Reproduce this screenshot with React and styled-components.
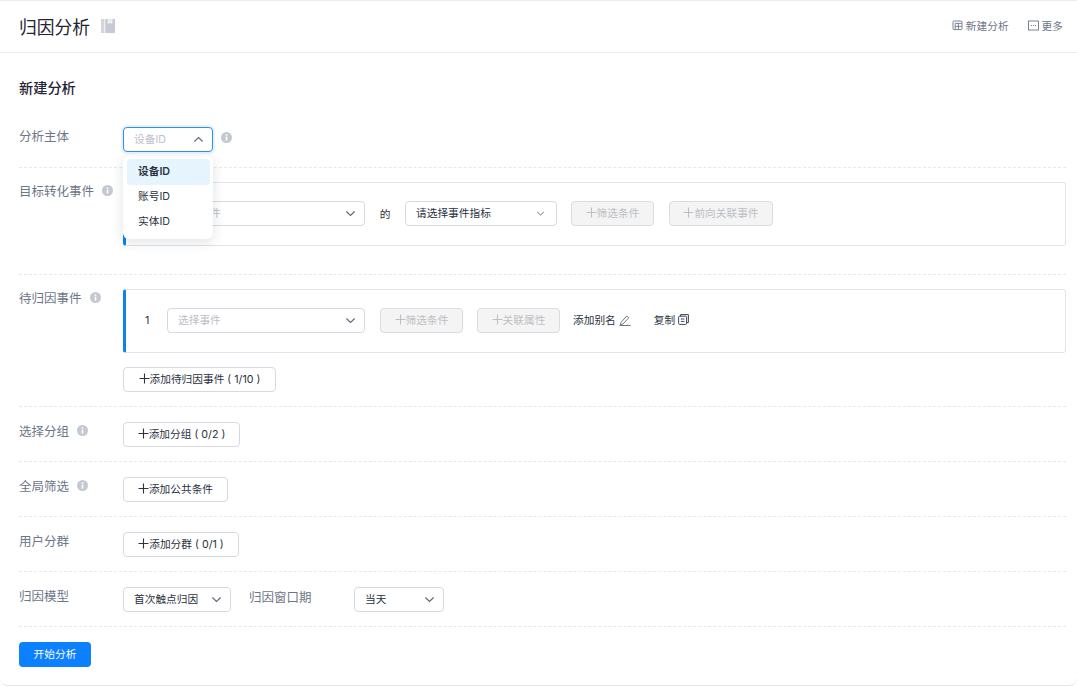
import React from "react";
import styled, { createGlobalStyle } from "styled-components";

const Global = createGlobalStyle`
  html, body { margin: 0; padding: 0; background: #fff; }
  body { font-family: "Inter", "Noto Sans CJK SC", sans-serif; color: #2b3240; }
  * { box-sizing: border-box; }
`;

const Page = styled.div`
  position: relative;
  width: 1077px;
  height: 686px;
  background: #fff;
  border-top: 1px solid #e8ebf0;
  border-bottom: 1px solid #e1e4ea;
  border-radius: 0 0 8px 8px;
`;
const Header = styled.header`
  height: 52px;
  display: flex;
  align-items: center;
  justify-content: space-between;
  padding: 0 14px 2px 19px;
  border-bottom: 1px solid #e8ebf0;
`;
const TitleWrap = styled.div`
  display: flex;
  align-items: center;
  gap: 11px;
`;
const Title = styled.h1`
  margin: 0;
  font-size: 17.8px;
  font-weight: 400;
  color: #1f2532;
`;
const HeaderActions = styled.div`
  display: flex;
  align-items: center;
  gap: 19px;
`;
const HeaderAction = styled.div`
  display: flex;
  align-items: center;
  gap: 3px;
  font-size: 10.7px;
  color: #6d7688;
`;
const Body = styled.main`
  padding: 0 11px 0 19px;
`;
const SectionTitle = styled.h2`
  margin: 0;
  padding-top: 25px;
  height: 59px;
  font-size: 14.2px;
  line-height: 20px;
  font-weight: 500;
  color: #1f2532;
`;
const Row = styled.div`
  display: flex;
  align-items: flex-start;
  padding: ${(p) => p.$top ?? 15}px 0 ${(p) => p.$bottom ?? 14}px;
  border-bottom: 1px dashed #e6e8ed;
`;
const Label = styled.div`
  width: 104px;
  flex: none;
  display: flex;
  align-items: center;
  gap: 8px;
  height: 18px;
  padding-bottom: 2px;
  font-size: 12.5px;
  color: #6d7688;
`;
const Content = styled.div`
  flex: 1;
  display: flex;
  flex-direction: column;
  gap: 14px;
  align-items: flex-start;
`;
const Inline = styled.div`
  display: flex;
  align-items: center;
  gap: ${(p) => p.$gap ?? 8}px;
  margin-left: ${(p) => p.$ml ?? 0}px;
`;
const Card = styled.div`
  width: 100%;
  height: 64px;
  display: flex;
  align-items: center;
  padding-left: 18px;
  padding-bottom: 1px;
  border: 1px solid #e1e4ea;
  border-left: 3px solid #0d80f2;
  border-radius: 3px;
  background: #fff;
`;
const Index = styled.span`
  width: 23px;
  flex: none;
  padding-left: 1px;
  font-size: 10.7px;
  color: #2b3240;
`;
const SelectBox = styled.div`
  width: ${(p) => p.$w}px;
  height: 25px;
  flex: none;
  display: flex;
  align-items: center;
  justify-content: space-between;
  padding: 0 ${(p) => p.$pr ?? 8}px 2px 10px;
  border: 1px solid ${(p) => (p.$open ? "#2f8ff0" : "#d6d9df")};
  border-radius: 4px;
  background: #fff;
  box-shadow: ${(p) => (p.$open ? "0 0 0 2px #e8f3fe" : "none")};
  font-size: 10.7px;
  color: ${(p) => (p.$placeholder ? "#bcc0c8" : "#2b3240")};
`;
const DisabledButton = styled.div`
  height: 25px;
  width: ${(p) => p.$w}px;
  flex: none;
  display: flex;
  align-items: center;
  justify-content: center;
  padding-bottom: 2px;
  border: 1px solid #dadcdf;
  border-radius: 4px;
  background: #f4f4f5;
  font-size: 10.7px;
  color: #bcbfc4;
`;
const AddButton = styled.div`
  height: 25px;
  width: ${(p) => p.$w}px;
  display: flex;
  align-items: center;
  justify-content: center;
  padding-bottom: 2px;
  border: 1px solid #d6d9df;
  border-radius: 4px;
  background: #fff;
  font-size: 10.7px;
  color: #2b3240;
  white-space: pre;
`;
const Of = styled.span`
  width: 40px;
  text-align: center;
  flex: none;
  font-size: 10.7px;
  color: #2b3240;
`;
const TextAction = styled.span`
  display: inline-flex;
  align-items: center;
  gap: 3px;
  padding-bottom: 2px;
  font-size: 10.7px;
  color: #2b3240;
  margin-left: ${(p) => p.$ml ?? 0}px;
`;
const Primary = styled.button`
  display: block;
  margin: 15px 0 0;
  width: 72px;
  height: 25px;
  padding: 0 0 2px;
  border: 0;
  border-radius: 4px;
  background: #0d80ff;
  color: #fff;
  font: inherit;
  font-size: 10.7px;
`;
const InlineLabel = styled.span`
  width: 123px;
  flex: none;
  height: 18px;
  padding-left: 18px;
  font-size: 12.5px;
  color: #6d7688;
`;
const Menu = styled.ul`
  position: absolute;
  left: 123px;
  top: 155px;
  width: 90px;
  height: 83px;
  margin: 0;
  padding: 3px 3px 0 4px;
  list-style: none;
  background: #fff;
  border-radius: 6px;
  box-shadow: 0 3px 12px rgba(30, 40, 60, 0.14);
`;
const MenuItem = styled.li`
  height: 26px;
  margin-bottom: -1px;
  display: flex;
  align-items: center;
  padding: 0 0 4px 11px;
  border-radius: 4px;
  font-size: 10.7px;
  font-weight: ${(p) => (p.$active ? 600 : 400)};
  background: ${(p) => (p.$active ? "#e6f4fd" : "transparent")};
  color: #2b3240;
`;
const ChevronSvg = styled.svg`
  flex: none;
  margin-bottom: -2px;
`;
const InfoSvg = styled.svg`
  flex: none;
  margin-bottom: ${(p) => (p.$raised ? 4 : 0)}px;
`;

const Chevron = ({ up, size = 11, color = "#5f6878" }) => (
  <ChevronSvg width={size} height={size} viewBox="0 0 12 12" fill="none" stroke={color} strokeWidth="1.2">
    <path d={up ? "M1.5 8.2 6 3.8l4.5 4.4" : "M1.5 3.8 6 8.2l4.5-4.4"} />
  </ChevronSvg>
);
const Info = ({ raised }) => (
  <InfoSvg $raised={raised} width="11" height="11" viewBox="0 0 11 11">
    <circle cx="5.5" cy="5.5" r="5.5" fill="#c4c8d0" />
    <rect x="4.7" y="4.6" width="1.6" height="4" fill="#fff" />
    <rect x="4.7" y="2.3" width="1.6" height="1.5" fill="#fff" />
  </InfoSvg>
);
const Plus = () => (
  <svg width="11" height="11" viewBox="0 0 11 11" stroke="currentColor" strokeWidth="1.1">
    <path d="M5.5 0.5v10M0.5 5.5h10" />
  </svg>
);
const Book = () => (
  <svg width="14" height="14" viewBox="0 0 14 14" fill="#c6cad3">
    <path d="M0 0h3.4v14H0z" fill="#d3d6dd" />
    <path d="M4.2 0h2.6v5l2.2-1.6L11.2 5V0H14v14H4.2z" />
    <path d="M7.4 0h3.2v3.6L9 2.6 7.4 3.6z" fill="#e4e6eb" />
  </svg>
);
const NewIcon = () => (
  <svg width="11" height="11" viewBox="0 0 11 11" fill="none" stroke="#6d7688" strokeWidth="0.9">
    <rect x="1" y="1" width="9" height="8.6" rx="1" />
    <path d="M3.2 3.4h6.5M3.2 3.4v6M6.4 3.4v6M3.2 6.4h6.5" />
  </svg>
);
const MoreIcon = () => (
  <svg width="11" height="11" viewBox="0 0 11 11" fill="none" stroke="#6d7688" strokeWidth="0.9">
    <rect x="0.5" y="1" width="10" height="9" />
    <path d="M3 5.5h1M5 5.5h1M7 5.5h1" />
  </svg>
);
const Pencil = () => (
  <svg width="12" height="12" viewBox="0 0 12 12" fill="none" stroke="#5f6878" strokeWidth="0.9">
    <path d="M1.8 8.6 7.8 2l2 1.8-6 6.4-2.4.4zM0.5 11.5h11" />
  </svg>
);
const Copy = () => (
  <svg width="11" height="11" viewBox="0 0 11 11" fill="none" stroke="#2b3240" strokeWidth="0.9">
    <rect x="0.6" y="2.2" width="8" height="8.2" rx="1" />
    <path d="M2.6 2.2V0.6h7.8v8H8.6M2.8 5h3.6M2.8 7.4h3.6" />
  </svg>
);

export default function App() {
  return (
    <Page>
      <Global />
      <Header>
        <TitleWrap>
          <Title>归因分析</Title>
          <Book />
        </TitleWrap>
        <HeaderActions>
          <HeaderAction><NewIcon />新建分析</HeaderAction>
          <HeaderAction><MoreIcon />更多</HeaderAction>
        </HeaderActions>
      </Header>
      <Body>
        <SectionTitle>新建分析</SectionTitle>
        <Row $top={15} $bottom={15}>
          <Label>分析主体</Label>
          <Inline $gap={8}>
            <SelectBox $w={90} $open $placeholder>设备ID<Chevron up /></SelectBox>
            <Info raised />
          </Inline>
        </Row>
        <Row $top={14} $bottom={28}>
          <Label>目标转化事件<Info /></Label>
          <Content>
            <Card>
              <Index />
              <SelectBox $w={198} $placeholder>选择事件<Chevron /></SelectBox>
              <Of>的</Of>
              <SelectBox $w={152} $pr={11}>请选择事件指标<Chevron size={9} /></SelectBox>
              <Inline $gap={15} $ml={14}>
                <DisabledButton $w={83}><Plus />筛选条件</DisabledButton>
                <DisabledButton $w={104}><Plus />前向关联事件</DisabledButton>
              </Inline>
            </Card>
          </Content>
        </Row>
        <Row $top={14}>
          <Label>待归因事件<Info /></Label>
          <Content>
            <Card>
              <Index>1</Index>
              <SelectBox $w={198} $placeholder>选择事件<Chevron /></SelectBox>
              <Inline $gap={14} $ml={15}>
                <DisabledButton $w={83}><Plus />筛选条件</DisabledButton>
                <DisabledButton $w={83}><Plus />关联属性</DisabledButton>
              </Inline>
              <TextAction $ml={13}>添加别名<Pencil /></TextAction>
              <TextAction $ml={23}>复制<Copy /></TextAction>
            </Card>
            <AddButton $w={153}><Plus />添加待归因事件 ( 1/10 )</AddButton>
          </Content>
        </Row>
        <Row>
          <Label>选择分组<Info /></Label>
          <AddButton $w={117}><Plus />添加分组 ( 0/2 )</AddButton>
        </Row>
        <Row>
          <Label>全局筛选<Info /></Label>
          <AddButton $w={105}><Plus />添加公共条件</AddButton>
        </Row>
        <Row>
          <Label>用户分群</Label>
          <AddButton $w={116}><Plus />添加分群 ( 0/1 )</AddButton>
        </Row>
        <Row>
          <Label>归因模型</Label>
          <SelectBox $w={108}>首次触点归因<Chevron /></SelectBox>
          <InlineLabel>归因窗口期</InlineLabel>
          <SelectBox $w={90}>当天<Chevron /></SelectBox>
        </Row>
        <Primary>开始分析</Primary>
      </Body>
      <Menu>
        <MenuItem $active>设备ID</MenuItem>
        <MenuItem>账号ID</MenuItem>
        <MenuItem>实体ID</MenuItem>
      </Menu>
    </Page>
  );
}
